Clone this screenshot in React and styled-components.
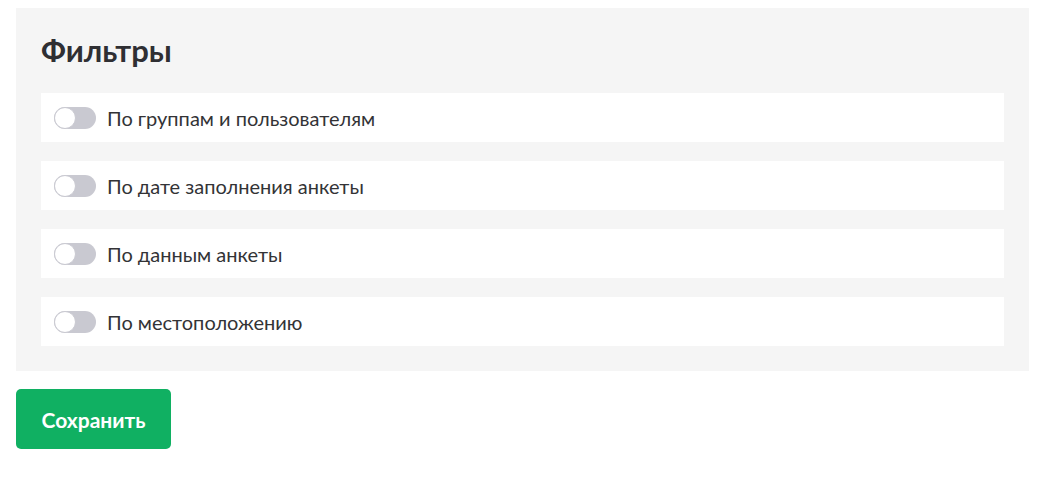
import React, { useState } from "react";
import styled, { createGlobalStyle } from "styled-components";

const Global = createGlobalStyle`
  body {
    margin: 0;
    padding: 8px 14px 8px 16px;
    background: #ffffff;
    font-family: Lato, "Noto Sans", sans-serif;
  }
  * { box-sizing: border-box; }
`;

const Panel = styled.section`
  background: #f5f5f5;
  padding: 23px 25px 25px;
`;

const Title = styled.h2`
  margin: 0 0 24px;
  font-size: 31px;
  font-weight: 700;
  color: #2f2f33;
  line-height: 38px;
`;

const List = styled.div`
  display: flex;
  flex-direction: column;
  gap: 19px;
`;

const Row = styled.label`
  display: flex;
  align-items: center;
  gap: 11px;
  height: 49px;
  padding: 0 13px;
  background: #ffffff;
  cursor: pointer;
`;

const Track = styled.span`
  position: relative;
  flex: none;
  width: 42px;
  height: 22px;
  border-radius: 11px;
  background: ${(p) => (p.$on ? "#10b062" : "#c9c9d1")};
  transition: background 0.2s;
`;

const Knob = styled.span`
  position: absolute;
  top: 0;
  left: ${(p) => (p.$on ? "20px" : "0")};
  width: 22px;
  height: 22px;
  border-radius: 50%;
  background: #ffffff;
  border: 1px solid #c9c9d1;
  transition: left 0.2s;
`;

const RowText = styled.span`
  font-size: 20px;
  color: #333336;
`;

const SaveButton = styled.button`
  display: block;
  margin-top: 18px;
  width: 155px;
  height: 60px;
  border: none;
  border-radius: 5px;
  background: #10b062;
  color: #ffffff;
  font-family: Lato, "Noto Sans", sans-serif;
  font-size: 21px;
  font-weight: 700;
  cursor: pointer;
`;

const filters = [
  "По группам и пользователям",
  "По дате заполнения анкеты",
  "По данным анкеты",
  "По местоположению",
];

function Toggle({ on }) {
  return (
    <Track $on={on}>
      <Knob $on={on} />
    </Track>
  );
}

export default function App() {
  const [state, setState] = useState(filters.map(() => false));
  return (
    <>
      <Global />
      <Panel>
        <Title>Фильтры</Title>
        <List>
          {filters.map((f, i) => (
            <Row
              key={f}
              onClick={() =>
                setState((s) => s.map((v, j) => (j === i ? !v : v)))
              }
            >
              <Toggle on={state[i]} />
              <RowText>{f}</RowText>
            </Row>
          ))}
        </List>
      </Panel>
      <SaveButton>Сохранить</SaveButton>
    </>
  );
}
